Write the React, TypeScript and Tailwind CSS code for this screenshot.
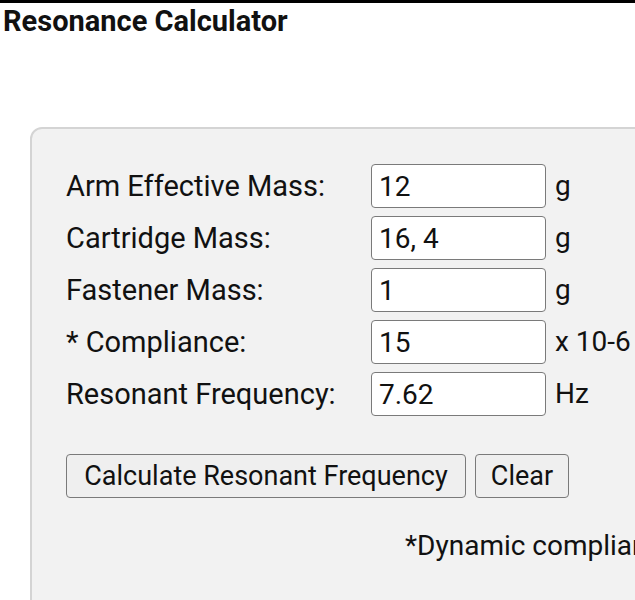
import React from "react";

const rows = [
  { label: "Arm Effective Mass:", value: "12", unit: "g" },
  { label: "Cartridge Mass:", value: "16, 4", unit: "g" },
  { label: "Fastener Mass:", value: "1", unit: "g" },
  { label: "* Compliance:", value: "15", unit: "x 10-6" },
  { label: "Resonant Frequency:", value: "7.62", unit: "Hz" },
];

export default function App() {
  return (
    <div className="w-[635px] h-[600px] overflow-hidden bg-white border-t-[3px] border-black font-['Roboto',sans-serif] text-[#111]">
      <h1 className="pl-[3px] pt-[4px] text-[29px] font-bold leading-none">Resonance Calculator</h1>

      {/* calculator panel */}
      <div className="ml-[30px] mt-[91px] w-[760px] h-[600px] rounded-[12px] border-2 border-[#d4d4d4] bg-[#f2f2f2] pl-[34px] pt-[35px]">
        {rows.map((r) => (
          <div key={r.label} className="flex items-center h-[44px] mb-[8px]">
            <span className="w-[305px] text-[29px] leading-none">{r.label}</span>
            <input
              readOnly
              value={r.value}
              className="w-[175px] h-[44px] rounded-[4px] border border-[#7a7a7a] bg-white px-[7px] text-[28px] text-[#111] outline-none"
            />
            <span className="ml-[9px] text-[28px] leading-none whitespace-nowrap">{r.unit}</span>
          </div>
        ))}

        <div className="flex gap-[9px] pt-[30px]">
          <button className="w-[400px] h-[44px] rounded-[4px] border border-[#7a7a7a] bg-[#efefef] text-[27px] leading-none">
            Calculate Resonant Frequency
          </button>
          <button className="w-[94px] h-[44px] rounded-[4px] border border-[#7a7a7a] bg-[#efefef] text-[27px] leading-none">
            Clear
          </button>
        </div>

        <p className="ml-[339px] mt-[34px] text-[28px] leading-none whitespace-nowrap">
          *Dynamic compliance
        </p>
      </div>
    </div>
  );
}
